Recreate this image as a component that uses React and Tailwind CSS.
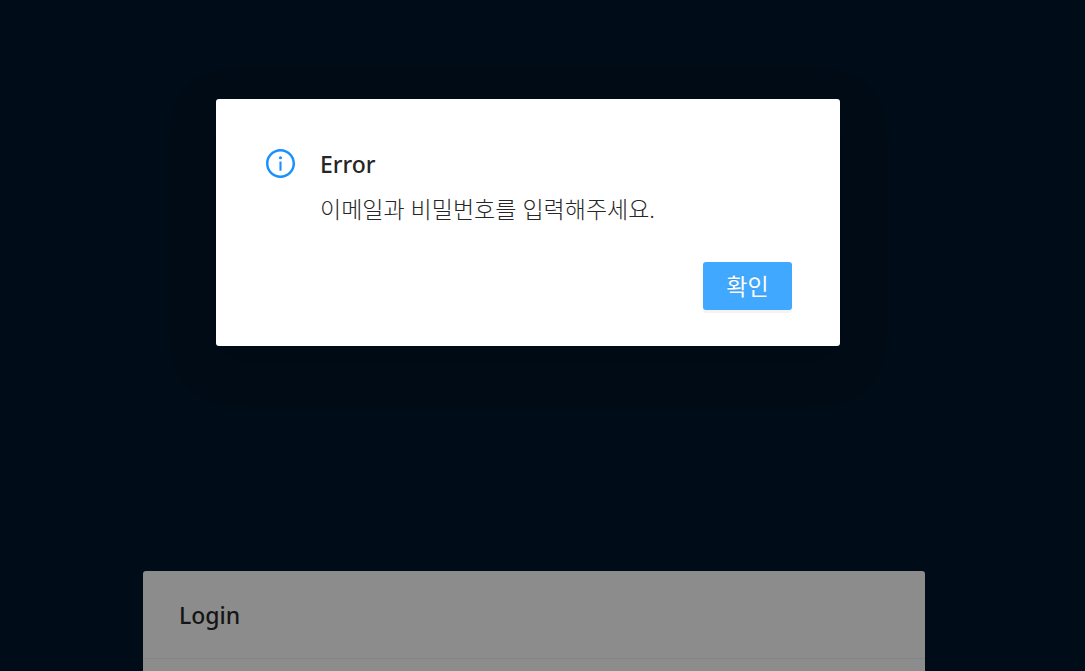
export default function App() {
  return (
    <div className="relative min-h-screen overflow-hidden bg-[#000c17] font-['Noto_Sans','Noto_Sans_CJK_KR',sans-serif]">
      <main className="flex h-screen justify-center overflow-hidden pt-[571px] pr-[17px]">
        <section className="h-80 w-[782px] rounded-[3px] bg-[#8c8c8c]">
          <header className="border-b border-[#848484] px-9 pt-[26px] pb-[25px]">
            <h1 className="text-[23px] leading-9 font-medium text-[#151515]">Login</h1>
          </header>
        </section>
      </main>
      <div className="absolute inset-0 flex items-start justify-center pt-[99px] pr-[29px]">
        <div
          role="alertdialog"
          aria-labelledby="dialog-title"
          aria-describedby="dialog-text"
          className="w-[624px] rounded-[3px] bg-white px-12 pt-[47px] pb-9 shadow-[0_14px_42px_8px_rgba(0,0,0,0.15)]"
        >
          <div className="flex gap-[25px]">
            <svg viewBox="64 64 896 896" className="mt-[3px] ml-0.5 size-[29px] shrink-0" fill="#1890ff" aria-hidden="true">
              <path d="M512 64C264.600 64 64 264.600 64 512s200.600 448 448 448 448-200.600 448-448S759.400 64 512 64zm0 820c-205.400 0-372-166.600-372-372s166.600-372 372-372 372 166.600 372 372-166.600 372-372 372z" />
              <path d="M464 336a48 48 0 1 0 96 0 48 48 0 1 0-96 0zm72 112h-48c-4.400 0-8 3.600-8 8v272c0 4.400 3.600 8 8 8h48c4.400 0 8-3.600 8-8V456c0-4.400-3.600-8-8-8z" />
            </svg>
            <div>
              <h2 id="dialog-title" className="text-[23px] leading-9 font-medium text-[#262626]">Error</h2>
              <p id="dialog-text" className="mt-[9px] text-[23px] leading-9 font-light text-[#262626]">이메일과 비밀번호를 입력해주세요.</p>
            </div>
          </div>
          <div className="mt-[35px] flex justify-end">
            <button type="button" className="h-12 w-[89px] rounded-[3px] bg-[#40a9ff] text-[23px] leading-9 font-normal text-white shadow-[0_3px_0_rgba(0,0,0,0.045)] [text-shadow:0_-1px_0_rgba(0,0,0,0.12)]">확인</button>
          </div>
        </div>
      </div>
    </div>
  );
}
